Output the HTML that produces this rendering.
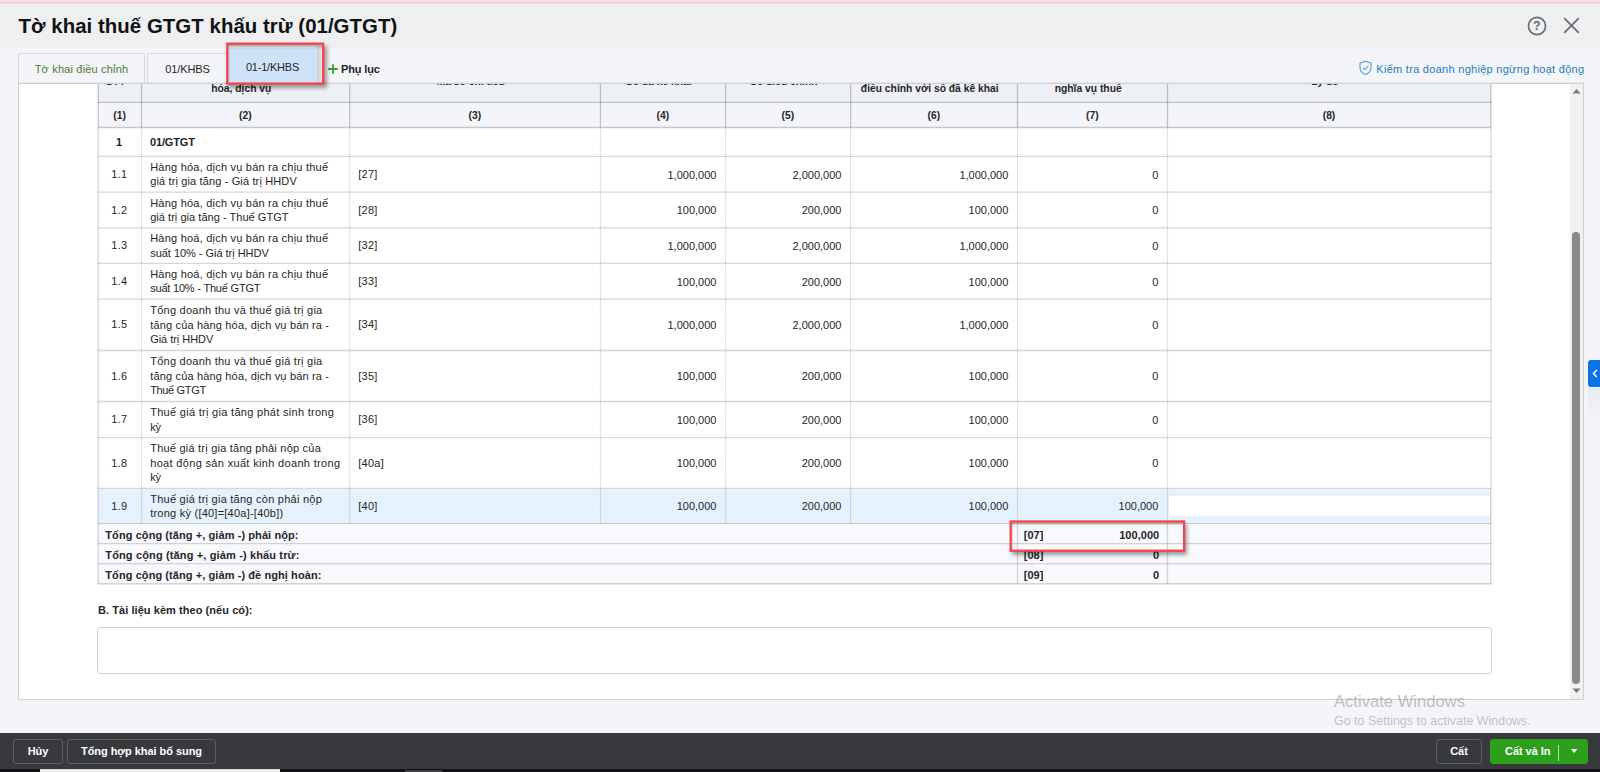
<!DOCTYPE html><html lang='vi'><head><meta charset='utf-8'><title>Tờ khai thuế GTGT khấu trừ (01/GTGT)</title><style>
*{box-sizing:border-box;margin:0;padding:0}
html,body{width:1600px;height:772px;overflow:hidden}
body{background:#f4f5f8;font-family:'Liberation Sans',sans-serif;font-size:11px;color:#262626;position:relative;letter-spacing:0.23px}
.abs{position:absolute}
#pink{left:0;top:0;width:1600px;height:4px;background:linear-gradient(to bottom,#ffe0e6 0,#ffe0e6 2px,#e5ccd3 2px,#e5ccd3 3px,#e8e1e5 3px,#e8e1e5 4px)}
#titlebar{left:0;top:4px;width:1600px;height:44px;background:#eeeff1}
#title{left:18.6px;top:14px;font-size:20.4px;font-weight:bold;color:#111;letter-spacing:0.045px;white-space:nowrap;line-height:24px}
.tab{top:53px;height:31px;border:1px solid #d6d8dd;border-bottom:none;border-radius:2px 2px 0 0;background:#f4f5f8;text-align:center;line-height:30.4px;white-space:nowrap}
#panel{left:18px;top:83px;width:1566px;height:617px;background:#fff;border:1px solid #cfd0d3;overflow:hidden}
#footer{left:0;top:733px;width:1600px;height:36px;background:#38393d}
#strip{left:0;top:769px;width:1600px;height:3px;background:#121316}
.fbtn{top:739px;height:25px;border:1px solid #5d5e62;border-radius:3px;color:#fff;font-weight:bold;text-align:center;line-height:23px;white-space:nowrap;letter-spacing:-0.05px}
.hl{position:absolute;height:1px}
.vl{position:absolute;width:1px}
.cell{position:absolute;white-space:nowrap}
.num{text-align:right;letter-spacing:0}
.b{font-weight:bold;letter-spacing:0.03px}
.h{font-size:10.3px;letter-spacing:0}
.lbl{line-height:14.5px;white-space:normal}
</style></head><body>
<div id='pink' class='abs'></div><div id='titlebar' class='abs'></div>
<div id='title' class='abs'>Tờ khai thuế GTGT khấu trừ (01/GTGT)</div>
<svg class='abs' style='left:1527.4px;top:15.7px' width='20' height='20' viewBox='0 0 20 20'><circle cx='10' cy='10' r='8.55' fill='none' stroke='#6a6b70' stroke-width='1.7'/><text x='10' y='14.4' text-anchor='middle' font-family="Liberation Sans, sans-serif" font-size='12.5' font-weight='bold' fill='#6a6b70'>?</text></svg>
<svg class='abs' style='left:1563px;top:17.3px' width='17' height='17' viewBox='0 0 17 17'><path d='M1.2 1.2 L15.8 15.8 M15.8 1.2 L1.2 15.8' stroke='#6a6b70' stroke-width='1.7' fill='none'/></svg>
<div class='abs tab' style='left:18px;width:127px;color:#4a7a35;letter-spacing:0.18px'>Tờ khai điều chỉnh</div>
<div class='abs tab' style='left:147px;width:81px;letter-spacing:-0.1px'>01/KHBS</div>
<div class='abs' style='left:228px;top:48px;width:89px;height:35px;background:#cfe3f8;text-align:center;line-height:38px;letter-spacing:-0.2px'>01-1/KHBS</div>
<div class='abs' style='left:317px;top:46px;width:5.5px;height:37px;background:linear-gradient(to right,#cfcfcf,#e6e6e8)'></div>
<div class='abs' style='left:341px;top:61px;line-height:16px;font-weight:bold;color:#222;letter-spacing:-0.15px'>Phụ lục</div>
<svg class='abs' style='left:327px;top:63px' width='12' height='12' viewBox='0 0 12 12'><path d='M6 1.2v9.6M1.2 6h9.6' stroke='#30a52a' stroke-width='1.8'/></svg>
<svg class='abs' style='left:1358px;top:59.6px' width='15' height='16' viewBox='0 0 15 16'><path d='M7.5 1.2 L13 3 V7.5 C13 11 10.6 13.4 7.5 14.6 C4.4 13.4 2 11 2 7.5 V3 Z' fill='none' stroke='#4a9ad6' stroke-width='1.05' stroke-linejoin='round'/><path d='M5 7.8 L6.9 9.6 L10.2 6' fill='none' stroke='#4a9ad6' stroke-width='1.05'/></svg>
<div class='abs' style='left:1376.3px;top:60.5px;line-height:16px;color:#1b7bc0;white-space:nowrap;letter-spacing:0.285px'>Kiểm tra doanh nghiệp ngừng hoạt động</div>
<div class='abs' style='left:18px;top:82px;width:1566px;height:1px;background:rgba(0,0,0,.05)'></div>
<div id='panel' class='abs'>
<div class='abs' style='left:-19px;top:-84px;width:1600px;height:772px'>
<div class='abs' style='left:98px;top:60px;width:1393px;height:42px;background:#edf0f5'></div>
<div class='abs' style='left:98px;top:102px;width:1393px;height:25px;background:#f4f5fa'></div>
<div class='abs' style='left:98px;top:489px;width:1393px;height:35px;background:#e5f2fd'></div>
<div class='abs' style='left:1168.6px;top:495.6px;width:321.7px;height:20.6px;background:#fff'></div>
<div class='abs' style='left:98px;top:525px;width:1393px;height:59px;background:#f8f9fd'></div>
<div class='cell b h' style='top:74px;line-height:15px;left:-134.45px;width:500px;text-align:center;'>STT</div>
<div class='cell b h' style='top:66px;line-height:15px;left:-8.70px;width:500px;text-align:center;'>Tên chỉ tiêu/Tên hàng</div>
<div class='cell b h' style='top:81px;line-height:15px;left:-8.70px;width:500px;text-align:center;'>hóa, dịch vụ</div>
<div class='cell b h' style='top:74px;line-height:15px;left:220.75px;width:500px;text-align:center;'>Mã số chỉ tiêu</div>
<div class='cell b h' style='top:74px;line-height:15px;left:408.70px;width:500px;text-align:center;'>Số đã kê khai</div>
<div class='cell b h' style='top:74px;line-height:15px;left:533.80px;width:500px;text-align:center;'>Số điều chỉnh</div>
<div class='cell b h' style='top:66px;line-height:15px;left:679.75px;width:500px;text-align:center;'>Chênh lệch giữa số</div>
<div class='cell b h' style='top:81px;line-height:15px;left:679.75px;width:500px;text-align:center;'>điều chỉnh với số đã kê khai</div>
<div class='cell b h' style='top:66px;line-height:15px;left:838.20px;width:500px;text-align:center;'>Thay đổi tăng/giảm</div>
<div class='cell b h' style='top:81px;line-height:15px;left:838.20px;width:500px;text-align:center;'>nghĩa vụ thuế</div>
<div class='cell b h' style='top:74px;line-height:15px;left:1074.90px;width:500px;text-align:center;'>Lý do</div>
<div class='cell b h' style='top:108px;line-height:15px;left:-130.35px;width:500px;text-align:center;'>(1)</div>
<div class='cell b h' style='top:108px;line-height:15px;left:-4.60px;width:500px;text-align:center;'>(2)</div>
<div class='cell b h' style='top:108px;line-height:15px;left:224.85px;width:500px;text-align:center;'>(3)</div>
<div class='cell b h' style='top:108px;line-height:15px;left:412.80px;width:500px;text-align:center;'>(4)</div>
<div class='cell b h' style='top:108px;line-height:15px;left:537.90px;width:500px;text-align:center;'>(5)</div>
<div class='cell b h' style='top:108px;line-height:15px;left:683.85px;width:500px;text-align:center;'>(6)</div>
<div class='cell b h' style='top:108px;line-height:15px;left:842.30px;width:500px;text-align:center;'>(7)</div>
<div class='cell b h' style='top:108px;line-height:15px;left:1079.00px;width:500px;text-align:center;'>(8)</div>
<div class='cell b' style='top:134.5px;line-height:15px;left:-131.00px;width:500px;text-align:center;'>1</div>
<div class='cell b' style='top:134.5px;line-height:15px;left:150.0px;letter-spacing:-0.14px;'>01/GTGT</div>
<div class='cell ' style='top:166.5px;line-height:15px;left:-130.70px;width:500px;text-align:center;'>1.1</div>
<div class='cell ' style='top:159.5px;line-height:15px;left:150.2px;letter-spacing:0.218px;'>Hàng hóa, dịch vụ bán ra chịu thuế</div>
<div class='cell ' style='top:173.5px;line-height:15px;left:150.2px;letter-spacing:0.137px;'>giá trị gia tăng - Giá trị HHDV</div>
<div class='cell ' style='top:166.5px;line-height:15px;left:358.3px;'>[27]</div>
<div class='cell num' style='top:167.5px;line-height:15px;right:883.60px;text-align:right;'>1,000,000</div>
<div class='cell num' style='top:167.5px;line-height:15px;right:758.60px;text-align:right;'>2,000,000</div>
<div class='cell num' style='top:167.5px;line-height:15px;right:591.70px;text-align:right;'>1,000,000</div>
<div class='cell num' style='top:167.5px;line-height:15px;right:441.70px;text-align:right;'>0</div>
<div class='cell ' style='top:202.5px;line-height:15px;left:-130.70px;width:500px;text-align:center;'>1.2</div>
<div class='cell ' style='top:195.5px;line-height:15px;left:150.2px;letter-spacing:0.218px;'>Hàng hóa, dịch vụ bán ra chịu thuế</div>
<div class='cell ' style='top:209.5px;line-height:15px;left:150.2px;letter-spacing:0.036px;'>giá trị gia tăng - Thuế GTGT</div>
<div class='cell ' style='top:202.5px;line-height:15px;left:358.3px;'>[28]</div>
<div class='cell num' style='top:202.5px;line-height:15px;right:883.60px;text-align:right;'>100,000</div>
<div class='cell num' style='top:202.5px;line-height:15px;right:758.60px;text-align:right;'>200,000</div>
<div class='cell num' style='top:202.5px;line-height:15px;right:591.70px;text-align:right;'>100,000</div>
<div class='cell num' style='top:202.5px;line-height:15px;right:441.70px;text-align:right;'>0</div>
<div class='cell ' style='top:237.5px;line-height:15px;left:-130.70px;width:500px;text-align:center;'>1.3</div>
<div class='cell ' style='top:230.5px;line-height:15px;left:150.2px;letter-spacing:0.218px;'>Hàng hoá, dịch vụ bán ra chịu thuế</div>
<div class='cell ' style='top:245.5px;line-height:15px;left:150.2px;letter-spacing:-0.03px;'>suất 10% - Giá trị HHDV</div>
<div class='cell ' style='top:237.5px;line-height:15px;left:358.3px;'>[32]</div>
<div class='cell num' style='top:238.5px;line-height:15px;right:883.60px;text-align:right;'>1,000,000</div>
<div class='cell num' style='top:238.5px;line-height:15px;right:758.60px;text-align:right;'>2,000,000</div>
<div class='cell num' style='top:238.5px;line-height:15px;right:591.70px;text-align:right;'>1,000,000</div>
<div class='cell num' style='top:238.5px;line-height:15px;right:441.70px;text-align:right;'>0</div>
<div class='cell ' style='top:273.5px;line-height:15px;left:-130.70px;width:500px;text-align:center;'>1.4</div>
<div class='cell ' style='top:266.5px;line-height:15px;left:150.2px;letter-spacing:0.218px;'>Hàng hoá, dịch vụ bán ra chịu thuế</div>
<div class='cell ' style='top:280.5px;line-height:15px;left:150.2px;letter-spacing:-0.2px;'>suất 10% - Thuế GTGT</div>
<div class='cell ' style='top:273.5px;line-height:15px;left:358.3px;'>[33]</div>
<div class='cell num' style='top:274.5px;line-height:15px;right:883.60px;text-align:right;'>100,000</div>
<div class='cell num' style='top:274.5px;line-height:15px;right:758.60px;text-align:right;'>200,000</div>
<div class='cell num' style='top:274.5px;line-height:15px;right:591.70px;text-align:right;'>100,000</div>
<div class='cell num' style='top:274.5px;line-height:15px;right:441.70px;text-align:right;'>0</div>
<div class='cell ' style='top:316.5px;line-height:15px;left:-130.70px;width:500px;text-align:center;'>1.5</div>
<div class='cell ' style='top:302.5px;line-height:15px;left:150.2px;letter-spacing:0.246px;'>Tổng doanh thu và thuế giá trị gia</div>
<div class='cell ' style='top:317.5px;line-height:15px;left:150.2px;letter-spacing:0.168px;'>tăng của hàng hóa, dịch vụ bán ra -</div>
<div class='cell ' style='top:331.5px;line-height:15px;left:150.2px;letter-spacing:-0.039px;'>Giá trị HHDV</div>
<div class='cell ' style='top:316.5px;line-height:15px;left:358.3px;'>[34]</div>
<div class='cell num' style='top:317.5px;line-height:15px;right:883.60px;text-align:right;'>1,000,000</div>
<div class='cell num' style='top:317.5px;line-height:15px;right:758.60px;text-align:right;'>2,000,000</div>
<div class='cell num' style='top:317.5px;line-height:15px;right:591.70px;text-align:right;'>1,000,000</div>
<div class='cell num' style='top:317.5px;line-height:15px;right:441.70px;text-align:right;'>0</div>
<div class='cell ' style='top:368.5px;line-height:15px;left:-130.70px;width:500px;text-align:center;'>1.6</div>
<div class='cell ' style='top:353.5px;line-height:15px;left:150.2px;letter-spacing:0.246px;'>Tổng doanh thu và thuế giá trị gia</div>
<div class='cell ' style='top:368.5px;line-height:15px;left:150.2px;letter-spacing:0.168px;'>tăng của hàng hóa, dịch vụ bán ra -</div>
<div class='cell ' style='top:382.5px;line-height:15px;left:150.2px;letter-spacing:-0.345px;'>Thuế GTGT</div>
<div class='cell ' style='top:368.5px;line-height:15px;left:358.3px;'>[35]</div>
<div class='cell num' style='top:368.5px;line-height:15px;right:883.60px;text-align:right;'>100,000</div>
<div class='cell num' style='top:368.5px;line-height:15px;right:758.60px;text-align:right;'>200,000</div>
<div class='cell num' style='top:368.5px;line-height:15px;right:591.70px;text-align:right;'>100,000</div>
<div class='cell num' style='top:368.5px;line-height:15px;right:441.70px;text-align:right;'>0</div>
<div class='cell ' style='top:411.5px;line-height:15px;left:-130.70px;width:500px;text-align:center;'>1.7</div>
<div class='cell ' style='top:404.5px;line-height:15px;left:150.2px;letter-spacing:0.296px;'>Thuế giá trị gia tăng phát sinh trong</div>
<div class='cell ' style='top:419.5px;line-height:15px;left:150.2px;letter-spacing:-0.3px;'>kỳ</div>
<div class='cell ' style='top:411.5px;line-height:15px;left:358.3px;'>[36]</div>
<div class='cell num' style='top:412.5px;line-height:15px;right:883.60px;text-align:right;'>100,000</div>
<div class='cell num' style='top:412.5px;line-height:15px;right:758.60px;text-align:right;'>200,000</div>
<div class='cell num' style='top:412.5px;line-height:15px;right:591.70px;text-align:right;'>100,000</div>
<div class='cell num' style='top:412.5px;line-height:15px;right:441.70px;text-align:right;'>0</div>
<div class='cell ' style='top:455.5px;line-height:15px;left:-130.70px;width:500px;text-align:center;'>1.8</div>
<div class='cell ' style='top:440.5px;line-height:15px;left:150.2px;letter-spacing:0.222px;'>Thuế giá trị gia tăng phải nộp của</div>
<div class='cell ' style='top:455.5px;line-height:15px;left:150.2px;letter-spacing:0.333px;'>hoạt động sản xuất kinh doanh trong</div>
<div class='cell ' style='top:469.5px;line-height:15px;left:150.2px;letter-spacing:-0.3px;'>kỳ</div>
<div class='cell ' style='top:455.5px;line-height:15px;left:358.3px;'>[40a]</div>
<div class='cell num' style='top:455.5px;line-height:15px;right:883.60px;text-align:right;'>100,000</div>
<div class='cell num' style='top:455.5px;line-height:15px;right:758.60px;text-align:right;'>200,000</div>
<div class='cell num' style='top:455.5px;line-height:15px;right:591.70px;text-align:right;'>100,000</div>
<div class='cell num' style='top:455.5px;line-height:15px;right:441.70px;text-align:right;'>0</div>
<div class='cell ' style='top:498.5px;line-height:15px;left:-130.70px;width:500px;text-align:center;'>1.9</div>
<div class='cell ' style='top:491.5px;line-height:15px;left:150.2px;letter-spacing:0.253px;'>Thuế giá trị gia tăng còn phải nộp</div>
<div class='cell ' style='top:505.5px;line-height:15px;left:150.2px;letter-spacing:0.234px;'>trong kỳ ([40]=[40a]-[40b])</div>
<div class='cell ' style='top:498.5px;line-height:15px;left:358.3px;'>[40]</div>
<div class='cell num' style='top:498.5px;line-height:15px;right:883.60px;text-align:right;'>100,000</div>
<div class='cell num' style='top:498.5px;line-height:15px;right:758.60px;text-align:right;'>200,000</div>
<div class='cell num' style='top:498.5px;line-height:15px;right:591.70px;text-align:right;'>100,000</div>
<div class='cell num' style='top:498.5px;line-height:15px;right:441.70px;text-align:right;'>100,000</div>
<div class='cell b' style='top:527.5px;line-height:15px;left:105.3px;letter-spacing:0.08px;'>Tổng cộng (tăng +, giảm -) phải nộp:</div>
<div class='cell b' style='top:527.5px;line-height:15px;left:1023.7px;'>[07]</div>
<div class='cell b num' style='top:527.5px;line-height:15px;right:440.80px;text-align:right;'>100,000</div>
<div class='cell b' style='top:547.5px;line-height:15px;left:105.3px;letter-spacing:0.14px;'>Tổng cộng (tăng +, giảm -) khấu trừ:</div>
<div class='cell b' style='top:547.5px;line-height:15px;left:1023.7px;'>[08]</div>
<div class='cell b num' style='top:547.5px;line-height:15px;right:440.80px;text-align:right;'>0</div>
<div class='cell b' style='top:567.5px;line-height:15px;left:105.3px;letter-spacing:0.08px;'>Tổng cộng (tăng +, giảm -) đề nghị hoàn:</div>
<div class='cell b' style='top:567.5px;line-height:15px;left:1023.7px;'>[09]</div>
<div class='cell b num' style='top:567.5px;line-height:15px;right:440.80px;text-align:right;'>0</div>
<svg class='abs' style='left:0;top:0' width='1600' height='772' viewBox='0 0 1600 772'><line x1='97.6' y1='102.4' x2='1491.5' y2='102.4' stroke='rgba(0,0,0,0.215)' stroke-width='1.3'/><line x1='97.6' y1='127.5' x2='1491.5' y2='127.5' stroke='rgba(0,0,0,0.215)' stroke-width='1.3'/><line x1='98.2' y1='80' x2='98.2' y2='127.5' stroke='rgba(0,0,0,0.215)' stroke-width='1.3'/><line x1='141.5' y1='80' x2='141.5' y2='127.5' stroke='rgba(0,0,0,0.215)' stroke-width='1.3'/><line x1='349.7' y1='80' x2='349.7' y2='127.5' stroke='rgba(0,0,0,0.215)' stroke-width='1.3'/><line x1='600.4' y1='80' x2='600.4' y2='127.5' stroke='rgba(0,0,0,0.215)' stroke-width='1.3'/><line x1='725.6' y1='80' x2='725.6' y2='127.5' stroke='rgba(0,0,0,0.215)' stroke-width='1.3'/><line x1='850.6' y1='80' x2='850.6' y2='127.5' stroke='rgba(0,0,0,0.215)' stroke-width='1.3'/><line x1='1017.5' y1='80' x2='1017.5' y2='127.5' stroke='rgba(0,0,0,0.215)' stroke-width='1.3'/><line x1='1167.5' y1='80' x2='1167.5' y2='127.5' stroke='rgba(0,0,0,0.215)' stroke-width='1.3'/><line x1='1490.9' y1='80' x2='1490.9' y2='127.5' stroke='rgba(0,0,0,0.215)' stroke-width='1.3'/><line x1='97.6' y1='156.4' x2='1491.5' y2='156.4' stroke='rgba(0,0,0,0.155)' stroke-width='1.3'/><line x1='97.6' y1='192.2' x2='1491.5' y2='192.2' stroke='rgba(0,0,0,0.155)' stroke-width='1.3'/><line x1='97.6' y1='227.8' x2='1491.5' y2='227.8' stroke='rgba(0,0,0,0.155)' stroke-width='1.3'/><line x1='97.6' y1='263.4' x2='1491.5' y2='263.4' stroke='rgba(0,0,0,0.155)' stroke-width='1.3'/><line x1='97.6' y1='299.1' x2='1491.5' y2='299.1' stroke='rgba(0,0,0,0.155)' stroke-width='1.3'/><line x1='97.6' y1='350.5' x2='1491.5' y2='350.5' stroke='rgba(0,0,0,0.155)' stroke-width='1.3'/><line x1='97.6' y1='401.5' x2='1491.5' y2='401.5' stroke='rgba(0,0,0,0.155)' stroke-width='1.3'/><line x1='97.6' y1='437.6' x2='1491.5' y2='437.6' stroke='rgba(0,0,0,0.155)' stroke-width='1.3'/><line x1='97.6' y1='488.4' x2='1491.5' y2='488.4' stroke='rgba(0,0,0,0.155)' stroke-width='1.3'/><line x1='97.6' y1='523.7' x2='1491.5' y2='523.7' stroke='rgba(0,0,0,0.155)' stroke-width='1.3'/><line x1='97.6' y1='543.7' x2='1491.5' y2='543.7' stroke='rgba(0,0,0,0.155)' stroke-width='1.3'/><line x1='97.6' y1='563.7' x2='1491.5' y2='563.7' stroke='rgba(0,0,0,0.155)' stroke-width='1.3'/><line x1='97.6' y1='583.9' x2='1491.5' y2='583.9' stroke='rgba(0,0,0,0.2)' stroke-width='1.3'/><line x1='98.2' y1='128.1' x2='98.2' y2='583.9' stroke='rgba(0,0,0,0.155)' stroke-width='1.3'/><line x1='1490.9' y1='128.1' x2='1490.9' y2='583.9' stroke='rgba(0,0,0,0.155)' stroke-width='1.3'/><line x1='141.5' y1='128.4' x2='141.5' y2='523.7' stroke='rgba(0,0,0,0.055)' stroke-width='1.2'/><line x1='141.5' y1='128.4' x2='141.5' y2='523.7' stroke='rgba(0,0,0,0.11)' stroke-width='1.2' stroke-dasharray='1.3 1.2'/><line x1='349.7' y1='128.4' x2='349.7' y2='523.7' stroke='rgba(0,0,0,0.055)' stroke-width='1.2'/><line x1='349.7' y1='128.4' x2='349.7' y2='523.7' stroke='rgba(0,0,0,0.11)' stroke-width='1.2' stroke-dasharray='1.3 1.2'/><line x1='600.4' y1='128.4' x2='600.4' y2='523.7' stroke='rgba(0,0,0,0.055)' stroke-width='1.2'/><line x1='600.4' y1='128.4' x2='600.4' y2='523.7' stroke='rgba(0,0,0,0.11)' stroke-width='1.2' stroke-dasharray='1.3 1.2'/><line x1='725.6' y1='128.4' x2='725.6' y2='523.7' stroke='rgba(0,0,0,0.055)' stroke-width='1.2'/><line x1='725.6' y1='128.4' x2='725.6' y2='523.7' stroke='rgba(0,0,0,0.11)' stroke-width='1.2' stroke-dasharray='1.3 1.2'/><line x1='850.6' y1='128.4' x2='850.6' y2='523.7' stroke='rgba(0,0,0,0.055)' stroke-width='1.2'/><line x1='850.6' y1='128.4' x2='850.6' y2='523.7' stroke='rgba(0,0,0,0.11)' stroke-width='1.2' stroke-dasharray='1.3 1.2'/><line x1='1017.5' y1='128.4' x2='1017.5' y2='523.7' stroke='rgba(0,0,0,0.055)' stroke-width='1.2'/><line x1='1017.5' y1='128.4' x2='1017.5' y2='523.7' stroke='rgba(0,0,0,0.11)' stroke-width='1.2' stroke-dasharray='1.3 1.2'/><line x1='1167.5' y1='128.4' x2='1167.5' y2='523.7' stroke='rgba(0,0,0,0.055)' stroke-width='1.2'/><line x1='1167.5' y1='128.4' x2='1167.5' y2='523.7' stroke='rgba(0,0,0,0.11)' stroke-width='1.2' stroke-dasharray='1.3 1.2'/><line x1='1017.5' y1='523.7' x2='1017.5' y2='583.9' stroke='rgba(0,0,0,0.155)' stroke-width='1.3'/><line x1='1167.5' y1='523.7' x2='1167.5' y2='583.9' stroke='rgba(0,0,0,0.155)' stroke-width='1.3'/></svg>
<div class='cell b' style='top:602.5px;line-height:15px;left:98.0px;letter-spacing:0.06px;'>B. Tài liệu kèm theo (nếu có):</div>
<div class='abs' style='left:97px;top:627px;width:1395px;height:47px;border:1px solid #d0d0d0;border-radius:3px;background:#fff'></div>
<div class='abs' style='left:1010.5px;top:521.5px;width:173.6px;height:29.2px;box-shadow:1.5px 2.5px 4px 1px rgba(0,0,0,.38), inset 1px 2px 3px rgba(0,0,0,.25)'></div>
<svg class='abs' style='left:1000px;top:514px' width='196' height='46' viewBox='1000 514 196 46'><rect x='1010.7' y='521.5' width='173.4' height='29.2' fill='none' stroke='#f6434a' stroke-width='2.25'/></svg>
<div class='abs' style='left:1570px;top:84px;width:13px;height:615px;background:#f1f1f1'></div>
<div class='abs' style='left:1572.3px;top:231.5px;width:7.8px;height:452px;background:#8a8a8a;border-radius:4px'></div>
<svg class='abs' style='left:1572px;top:88px' width='9' height='6' viewBox='0 0 9 6'><path d='M0.5 5.5 L4.5 1 L8.5 5.5Z' fill='#7a7a7a'/></svg>
<svg class='abs' style='left:1572px;top:688px' width='9' height='6' viewBox='0 0 9 6'><path d='M0.5 0.5 L4.5 5 L8.5 0.5Z' fill='#7a7a7a'/></svg>
</div></div>
<div class='abs' style='left:227px;top:44px;width:96.5px;height:39.5px;box-shadow:0 0 0 1px rgba(240,71,76,.0), 1.5px 2.5px 4px 1px rgba(0,0,0,.38), inset 1px 3px 3px rgba(0,0,0,.3)'></div>
<svg class='abs' style='left:220px;top:38px' width='112' height='54' viewBox='220 38 112 54'><rect x='227.3' y='43.65' width='95.9' height='39.95' fill='none' stroke='#f6434a' stroke-width='2.25'/></svg>
<div class='abs' style='left:1334px;top:692.4px;font-size:16.6px;line-height:20px;color:rgba(120,120,120,.45);letter-spacing:0;white-space:nowrap'>Activate Windows</div>
<div class='abs' style='left:1334px;top:713px;font-size:12.48px;line-height:16px;color:rgba(120,120,120,.45);letter-spacing:0;white-space:nowrap'>Go to Settings to activate Windows.</div>
<div class='abs' style='left:1588px;top:360px;width:14px;height:27px;background:#0a74e6;border-radius:3px 0 0 3px'></div>
<svg class='abs' style='left:1592px;top:369px' width='6' height='9' viewBox='0 0 6 9'><path d='M4.8 1 L1.5 4.5 L4.8 8' fill='none' stroke='#fff' stroke-width='1.5'/></svg>
<div id='footer' class='abs'></div><div id='strip' class='abs'></div>
<div class='abs' style='left:40px;top:769px;width:240px;height:3px;background:linear-gradient(to bottom,#b9babb 0,#f3f3f3 1px)'></div>
<div class='abs' style='left:405px;top:770px;width:37px;height:2px;background:#3c3d40'></div>
<div class='abs' style='left:1588px;top:388px;width:12px;height:34px;background:linear-gradient(to bottom,rgba(0,0,0,.045),rgba(0,0,0,0))'></div>
<div class='abs fbtn' style='left:13px;width:50px'>Hủy</div>
<div class='abs fbtn' style='left:67px;width:149px'>Tổng hợp khai bổ sung</div>
<div class='abs fbtn' style='left:1436px;width:46px'>Cất</div>
<div class='abs fbtn' style='left:1490px;width:98px;background:#2ca01c;border-color:#2ca01c;text-align:left;padding-left:14px'>Cất và In</div>
<div class='abs' style='left:1558px;top:745px;width:1px;height:16px;background:rgba(255,255,255,.65)'></div>
<svg class='abs' style='left:1570.5px;top:749px' width='6.4' height='4.2' viewBox='0 0 8 5'><path d='M0 0 L8 0 L4 5Z' fill='#fff'/></svg>
</body></html>
